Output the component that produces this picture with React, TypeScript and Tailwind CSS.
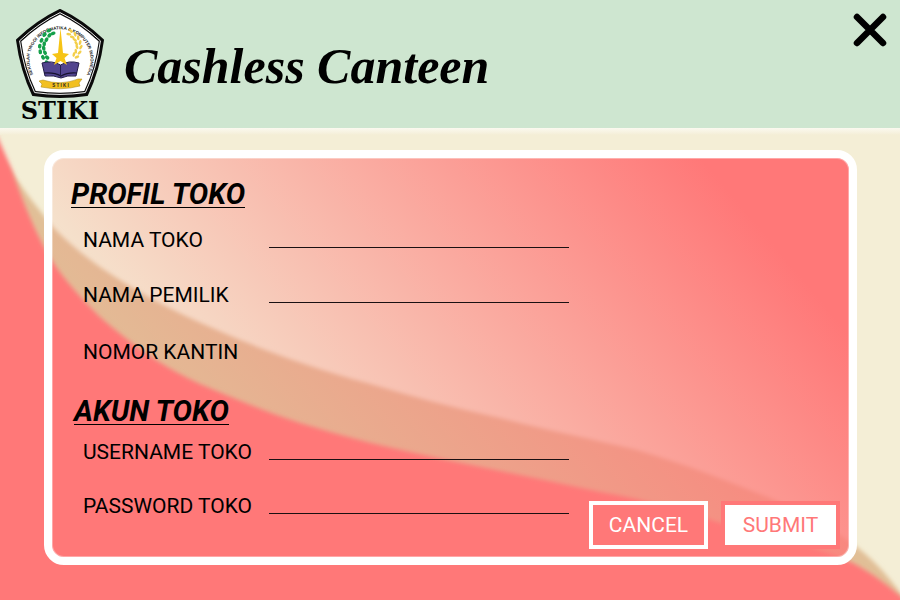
import React from "react";

const PENTAGON = "M60 10 Q83 21 103 40 Q99 70 87 95 Q60 99 33 95 Q21 70 17 40 Q37 21 60 10 Z";

function Crest() {
  const leaves = [
    [51, 32, -20], [47, 35, -45], [44, 40, -60], [42, 45, -80], [42, 50, -100], [44, 55, -120], [47, 60, -140],
  ];
  const grains = [
    [69, 32, 30], [73, 35, 45], [76, 38, 60], [78, 42, 80], [79, 46, 95], [78, 51, 110], [76, 55, 130],
  ];
  return (
    <svg viewBox="16 8 88 90" className="h-[90px] w-[88px]" role="img" aria-label="Lambang STIKI">
      <defs>
        <path id="crest-ring" d="M34.200 76 A30.500 30.500 0 1 1 85.800 76" />
      </defs>
      <path d={PENTAGON} fill="#0b0b0b" stroke="#0b0b0b" strokeWidth="2" strokeLinejoin="round" />
      <path d={PENTAGON} fill="none" stroke="#fff" strokeWidth="1" transform="translate(60 54) scale(.94) translate(-60 -54)" />
      <path d={PENTAGON} fill="#fff" transform="translate(60 54) scale(.9) translate(-60 -54)" />
      <text fontFamily="Liberation Sans, sans-serif" fontSize="4.400" fontWeight="700" fill="#222">
        <textPath href="#crest-ring" startOffset="50%" textAnchor="middle">
          SEKOLAH TINGGI INFORMATIKA &amp; KOMPUTER INDONESIA
        </textPath>
      </text>
      {leaves.map(([x, y, r], i) => (
        <g key={i} transform={`translate(${x} ${y}) rotate(${r})`} fill="#14a04a">
          <ellipse cx="-1.500" cy="-2" rx="2.500" ry="1.800" />
          <ellipse cx="1.500" cy="2" rx="2.500" ry="1.800" />
        </g>
      ))}
      {grains.map(([x, y, r], i) => (
        <g key={i} transform={`translate(${x} ${y}) rotate(${r})`} fill="#f3cf4a">
          <ellipse cx="0" cy="-2.200" rx="2.500" ry="1.300" transform="rotate(25)" />
          <ellipse cx="0" cy="2.200" rx="2.500" ry="1.300" transform="rotate(-25)" />
        </g>
      ))}
      <path d="M42 63 Q52 60 60.500 65 Q69 60 79 63 L76 76 Q67 75 61 78 Q54 75 45 76 Z" fill="#52458f" stroke="#231d4a" strokeWidth="1" />
      <path d="M44 73 Q54 72 61 76 Q68 72 77 73" fill="none" stroke="#17122f" strokeWidth="1.200" />
      <path d="M60.500 65 V77" stroke="#231d4a" strokeWidth="1" />
      <path d="M60.500 28 L63 53 L69 54 L64.500 58 L67 65 L60.500 61 L54 65 L56.500 58 L52 54 L58 53 Z" fill="#f6c416" />
      <path d="M39 81 L43 80 Q61 86 78 79 L82 79 L79 83 L80 86 Q61 91 41 87 L42 84 Z" fill="#f2c021" stroke="#a5820f" strokeWidth=".5" />
      <text x="60.500" y="86.500" textAnchor="middle" fontFamily="Liberation Sans, sans-serif" fontSize="4.500" fontWeight="700" fill="#222">
        S T I K I
      </text>
    </svg>
  );
}

function Backdrop() {
  return (
    <svg
      aria-hidden="true"
      viewBox="0 128 900 472"
      preserveAspectRatio="none"
      className="absolute inset-0 -z-10 h-full w-full"
    >
      <defs>
        <filter id="soft" x="-5%" y="-5%" width="110%" height="110%">
          <feGaussianBlur stdDeviation="2" />
        </filter>
        <linearGradient id="glow" x1="0" y1="0" x2="0" y2="1">
          <stop offset="0" stopColor="#fbf9f0" />
          <stop offset="1" stopColor="#f4eed6" />
        </linearGradient>
      </defs>
      <rect y="128" width="900" height="472" fill="#f4eed6" />
      <path
        filter="url(#soft)"
        fill="#e1bf97"
        d="M-20 124 C-8 145 6 165 17 180 C28 196 38 208 53 227 C66 241 82 254 100 267 C135 291 172 311 217 330 C262 350 312 368 367 383 C410 396 455 408 500 418 C545 430 592 439 637 450 C685 464 730 482 770 498 C805 513 835 530 857 547 C877 563 892 580 905 600 L920 640 H-20 Z"
      />
      <path
        filter="url(#soft)"
        fill="#ff7878"
        d="M-20 90 C-10 122 2 146 12 170 C20 194 31 222 43 245 C57 272 75 292 100 317 C130 343 162 367 200 384 C235 399 266 412 300 423 C345 437 389 448 433 457 C490 469 545 480 600 492 C640 499 680 509 717 522 C765 534 812 545 853 563 C875 575 890 587 905 600 L920 640 H-20 Z"
      />
      <rect y="128" width="900" height="7" fill="url(#glow)" />
    </svg>
  );
}

type FieldProps = { id: string; label: string; type?: string };

function Field({ id, label, type = "text" }: FieldProps) {
  return (
    <div className="flex h-6 items-stretch">
      <label htmlFor={id} className="w-[186px] shrink-0 self-end text-[21px] leading-4 whitespace-nowrap">
        {label}
      </label>
      <input id={id} type={type} className="w-[300px] min-w-0 border-b border-[#1a1012] bg-transparent px-1 outline-none" />
    </div>
  );
}

function SectionTitle({ children }: { children: React.ReactNode }) {
  return (
    <h2 className="h-8 w-fit border-b border-black text-[29px] leading-9 font-bold italic">{children}</h2>
  );
}

export default function App() {
  return (
    <div className="flex min-h-screen flex-col bg-[#ff7878] font-['Roboto',sans-serif] text-black">
      <header className="flex h-32 shrink-0 items-start bg-[#cee6d0] pt-2 pr-3 pl-4">
        <div className="flex w-[88px] shrink-0 flex-col items-center">
          <Crest />
          <span className="font-['DejaVu_Serif',serif] text-2xl leading-[26px] font-bold">STIKI</span>
        </div>
        <h1 className="mt-6 ml-5 font-['Liberation_Serif',serif] text-[50px] leading-[68px] font-bold whitespace-nowrap italic">
          Cashless Canteen
        </h1>
        <button type="button" aria-label="Tutup" className="mt-1 ml-auto cursor-pointer">
          <svg viewBox="0 0 36 36" className="size-9">
            <path d="M5 5 L31 31 M31 5 L5 31" stroke="#000" strokeWidth="6.500" strokeLinecap="round" />
          </svg>
        </button>
      </header>

      <main className="relative isolate flex flex-1 flex-col pt-[22px] pr-[43px] pb-[35px] pl-11">
        <Backdrop />
        <form
          onSubmit={(e) => e.preventDefault()}
          className="flex flex-1 flex-col rounded-[20px] border-8 border-white bg-[linear-gradient(50deg,rgba(255,120,120,0)_18%,rgba(255,120,120,1)_86%)] bg-origin-border pt-[18px] pr-[9px] pb-2 pl-[19px] shadow-[inset_0_0_0_1px_rgba(255,255,255,0.35)]"
        >
          <SectionTitle>PROFIL TOKO</SectionTitle>
          <div className="mt-4 flex flex-col gap-[31px] pl-3">
            <Field id="nama-toko" label="NAMA TOKO" />
            <Field id="nama-pemilik" label="NAMA PEMILIK" />
            <p className="mt-[2px] flex h-6 items-end text-[21px] leading-4">NOMOR KANTIN</p>
          </div>
          <div className="mt-[33px] pl-[3px]">
            <SectionTitle>AKUN TOKO</SectionTitle>
          </div>
          <div className="mt-[11px] flex flex-col pl-3">
            <Field id="username-toko" label="USERNAME TOKO" />
          </div>
          <div className="mt-auto flex items-end justify-between pl-3">
            <div className="pb-[35px]">
              <Field id="password-toko" label="PASSWORD TOKO" type="password" />
            </div>
            <div className="flex gap-[13px]">
              <button type="button" className="h-12 w-[119px] cursor-pointer border-4 border-white bg-[#ff7878] text-[21px] leading-6 text-white">
                CANCEL
              </button>
              <button type="submit" className="h-12 w-[119px] cursor-pointer border-4 border-[#ff7878] bg-white text-[21px] leading-6 text-[#ff7878]">
                SUBMIT
              </button>
            </div>
          </div>
        </form>
      </main>
    </div>
  );
}
